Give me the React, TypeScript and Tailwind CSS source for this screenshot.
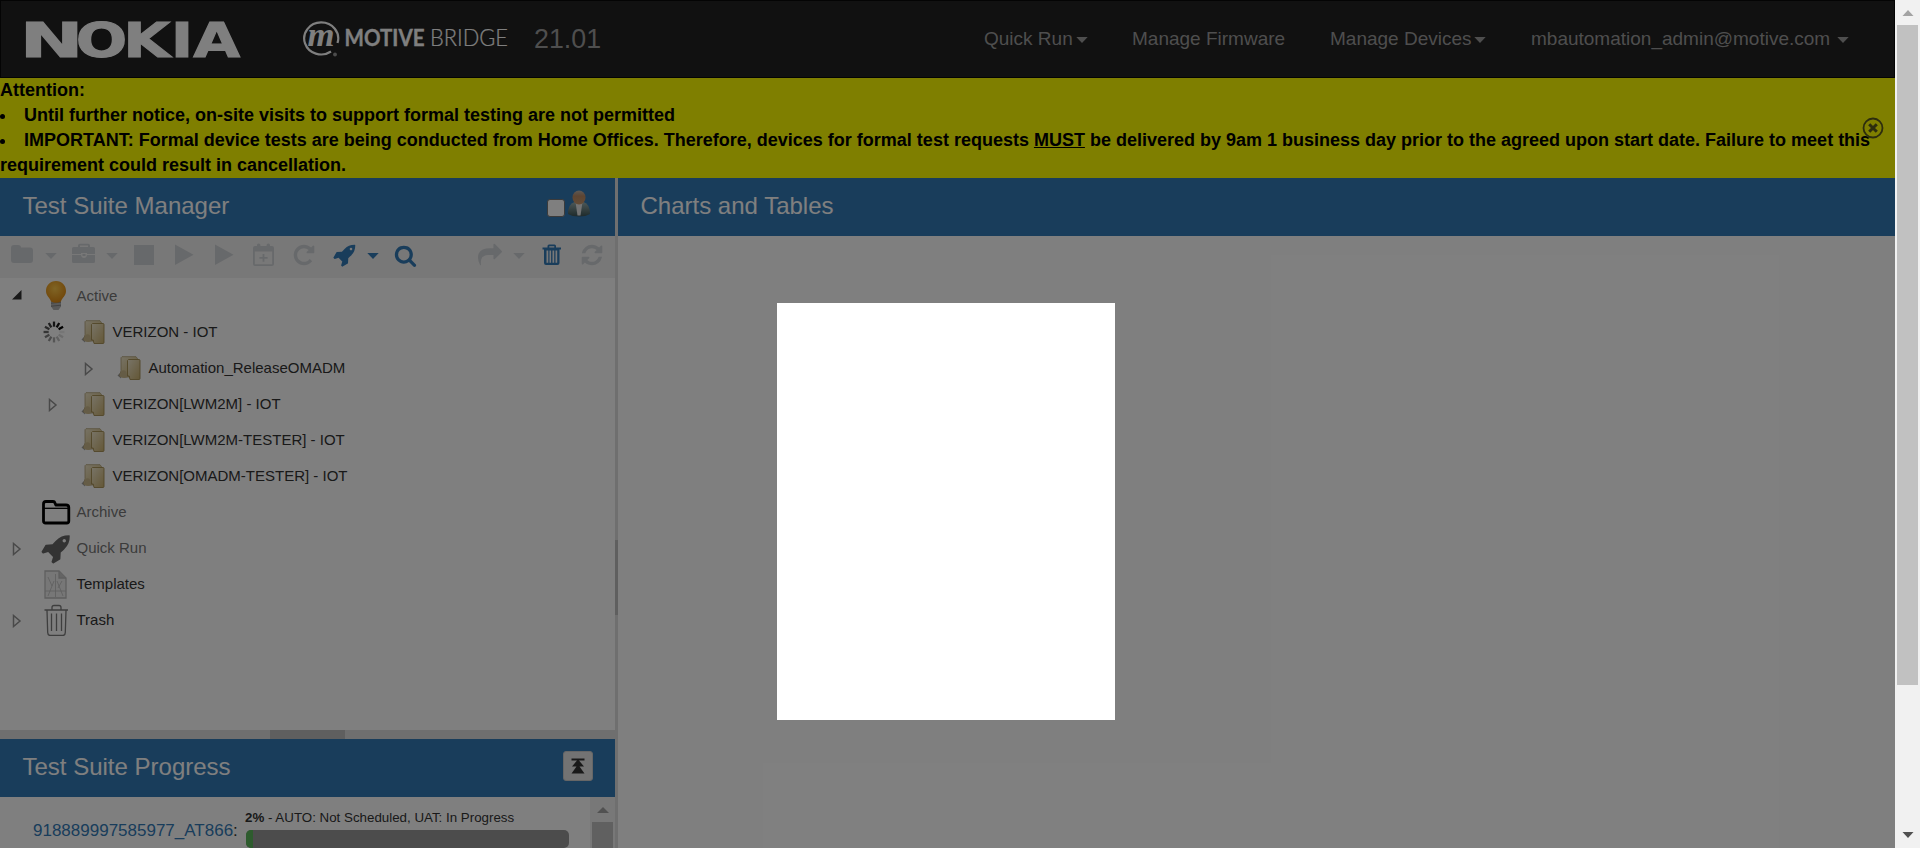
import React from "react";

const FA_ROCKET =
  "M1440 448q0-40-28-68t-68-28-68 28-28 68 28 68 68 28 68-28 28-68zm224-288q0 249-75.5 430.5T1335 955q-81 80-195 176l-20 379q-2 16-16 26l-384 224q-7 4-16 4-12 0-23-9l-64-64q-13-14-8-32l85-276-281-281-276 85q-3 1-9 1-14 0-23-9l-64-64q-17-19-5-39l224-384q10-14 26-16l379-20q96-114 176-195 188-187 358-258t431-71q14 0 24 9.5t10 22.5z";
const FA_REPEAT =
  "M1664 256v448q0 26-19 45t-45 19h-448q-42 0-59-40-17-39 14-69l138-138q-148-137-349-137-104 0-198.5 40.5t-163.5 109.5-109.5 163.5-40.5 198.5 40.5 198.5 109.5 163.5 163.5 109.5 198.5 40.5q119 0 225-52t179-147q7-10 23-12 15 0 25 9l137 138q9 8 9.5 20.5t-7.5 22.5q-109 132-264 204.5t-327 72.5q-156 0-298-61t-245-164-164-245-61-298 61-298 164-245 245-164 298-61q147 0 284.5 55.5t244.5 156.5l130-129q29-31 70-14 39 17 39 59z";
const FA_REFRESH =
  "M1639 1056q0 5-1 7-64 268-268 434.5t-478 166.5q-146 0-282.5-55t-243.5-157l-129 129q-19 19-45 19t-45-19-19-45v-448q0-26 19-45t45-19h448q26 0 45 19t19 45-19 45l-137 137q71 66 161 102t187 36q134 0 250-65t186-179q11-17 53-117 8-23 30-23h192q13 0 22.5 9.5t9.5 22.5zm25-800v448q0 26-19 45t-45 19h-448q-26 0-45-19t-19-45 19-45l138-138q-148-137-349-137-134 0-250 65t-186 179q-11 17-53 117-8 23-30 23h-199q-13 0-22.5-9.5t-9.5-22.5v-7q65-268 270-434.5t480-166.5q146 0 284 55.5t245 156.5l130-129q19-19 45-19t45 19 19 45z";
const FA_SHARE =
  "M1792 640q0 26-19 45l-512 512q-19 19-45 19t-45-19-19-45v-256h-224q-98 0-175.5 6t-154 21.5-133 42.5-105.5 69.5-80 101-48.5 138.5-17.5 181q0 55 5 123 0 6 2.5 23.5t2.5 26.5q0 15-8.5 25t-23.5 10q-16 0-28-17-7-9-13-22t-13.5-30-10.5-24q-127-285-127-451 0-199 53-333 162-403 875-403h224v-256q0-26 19-45t45-19 45 19l512 512q19 19 19 45z";
const FA_SEARCH =
  "M1216 832q0-185-131.5-316.5t-316.5-131.5-316.5 131.5-131.5 316.5 131.5 316.5 316.5 131.5 316.5-131.5 131.5-316.5zm512 832q0 52-38 90t-90 38q-54 0-90-38l-343-342q-179 124-399 124-143 0-273.5-55.5t-225-150-150-225-55.5-273.5 55.5-273.5 150-225 225-150 273.5-55.5 273.5 55.5 225 150 150 225 55.5 273.5q0 220-124 399l343 343q37 37 37 90z";

function Glyph({ d, className }: { d: string; className: string }) {
  return (
    <svg viewBox="0 0 1792 1792" className={className} fill="currentColor">
      <path d={d} />
    </svg>
  );
}

function Tool({ className, children }: { className: string; children: React.ReactNode }) {
  return (
    <svg viewBox="0 0 24 24" className={`size-6 shrink-0 ${className}`} fill="currentColor">
      {children}
    </svg>
  );
}

function Caret({ className = "" }: { className?: string }) {
  return (
    <svg viewBox="0 0 12 6" className={`h-1.5 w-3 shrink-0 ${className}`} fill="currentColor">
      <path d="M.3 0h11.4L6 6z" />
    </svg>
  );
}

function Header({ title, children }: { title: string; children?: React.ReactNode }) {
  return (
    <div className="flex h-[58px] shrink-0 items-center bg-[#337ab7] pr-[22px] pl-[22.5px] text-white">
      <h2 className="flex-1 pb-0.5 text-[24px] leading-none">{title}</h2>
      {children}
    </div>
  );
}

function Closed() {
  return (
    <svg viewBox="0 0 10 14" className="mt-0.5 h-3.5 w-2.5" fill="none" stroke="#929292" strokeWidth="1.5">
      <path d="M1.5 1.5v11L8 7z" />
    </svg>
  );
}

function Opened() {
  return (
    <svg viewBox="0 0 10 10" className="mb-0.5 size-2.5" fill="#333">
      <path d="M9.5 0v9.5H0z" />
    </svg>
  );
}

function Spinner() {
  return (
    <svg viewBox="0 0 24 24" className="ml-0.5 size-6" stroke="#000" strokeWidth="2.5">
      {Array.from({ length: 12 }, (_, i) => (
        <path
          key={i}
          d="M12 6.2V.6"
          transform={`rotate(${60 - i * 30} 12 12)`}
          opacity={1 - i * 0.085}
        />
      ))}
    </svg>
  );
}

function Folders() {
  return (
    <svg viewBox="0 0 24 24" className="size-6">
      <defs>
        <linearGradient id="manila" x1="0" y1="0" x2="1" y2="1">
          <stop offset="0" stopColor="#f1e9d0" />
          <stop offset="1" stopColor="#c8ae6c" />
        </linearGradient>
      </defs>
      <path d="M.5 19.500 4 16v6.500z" fill="#777" opacity=".7" />
      <path d="M5 .7h14l1.500 2V21H4.500l-2-1.200 1.500-5V1.700z" fill="url(#manila)" stroke="#b0a074" strokeWidth=".8" />
      <path d="M4 15.500q2.500-2.500 5 0l1.600 5.500q-4 2-7.800-.5z" fill="#cbb98c" />
      <path d="M11.500 3.500h10.500q1 0 1 1v18q0 1-1 1h-9l-.8-3.500h-1.700v-15.500z" fill="url(#manila)" stroke="#a38c50" strokeWidth=".9" />
    </svg>
  );
}

function Bulb() {
  return (
    <svg viewBox="0 0 32 32" className="size-8">
      <defs>
        <radialGradient id="glow" cx=".45" cy=".35" r=".65">
          <stop offset="0" stopColor="#ffc94a" />
          <stop offset="1" stopColor="#e08a12" />
        </radialGradient>
      </defs>
      <path d="M11 19h10v7.500l-2.500 3.500h-5l-2.500-3.500z" fill="#b4b4b4" />
      <path d="M11 23.200l10-1M11 26.200l10-1" stroke="#858585" strokeWidth="1" />
      <path d="M16 1C10 1 6 5.500 6 11c0 5 4 6.500 5 10.500q5 2.500 10 0c1-4 5-5.500 5-10.500C26 5.500 22 1 16 1z" fill="url(#glow)" />
    </svg>
  );
}

function Archive() {
  return (
    <svg viewBox="0 0 32 32" className="size-8" fill="none" stroke="#000" strokeWidth="2.800" strokeLinejoin="round">
      <path d="M3.500 8q0-2.500 2.500-2.500h7q1.500 0 2 1.500l.8 2H26q2.800 0 2.800 2.500v13.500q0 2-2 2H5.500q-2 0-2-2z" />
      <path d="M4 12.300h24.500" strokeWidth="1.300" />
    </svg>
  );
}

function Template() {
  return (
    <svg viewBox="0 0 32 32" className="size-8" fill="#efefef" stroke="#bdbdbd" strokeWidth="1.300">
      <path d="M5 3h14l7 7v20H5z" />
      <path d="M19 3v7h7" fill="#c8c8c8" />
      <path d="M5 23h21M15.500 6v23M14 13 8 28M17 13l6 15M8 9l4 9M22 13l-4 7" fill="none" strokeWidth=".8" />
    </svg>
  );
}

function Bin() {
  return (
    <svg viewBox="0 0 32 32" className="size-8" fill="none" stroke="#7c7c7c" strokeWidth="1.300">
      <path d="M4.500 6h23.500M12 6V3.500q0-2 2-2h5q2 0 2 2V6M7 6.500l.7 22q.1 3 2.500 3h12.600q2.400 0 2.500-3l.7-22M11.500 9.500v17.500M16.500 9.500v17.500M21.500 9.500v17.500" />
    </svg>
  );
}

type RowProps = {
  level?: 0 | 1 | 2;
  toggle?: React.ReactNode;
  icon: React.ReactNode;
  label: string;
  tone?: string;
};

const INDENT = ["pl-[5px]", "pl-[41px]", "pl-[77px]"];

function Row({ level = 0, toggle, icon, label, tone = "text-[#333]" }: RowProps) {
  return (
    <li className={`flex h-9 items-center ${INDENT[level]}`}>
      <span className="flex w-6 items-center justify-center">{toggle}</span>
      <span className={level === 0 ? "ml-[11px] w-8" : "ml-4 w-6"}>{icon}</span>
      <span className={`text-[15px] ${level === 0 ? "ml-[4.5px]" : "ml-[7.5px]"} ${tone}`}>{label}</span>
    </li>
  );
}

function Navbar() {
  return (
    <nav className="flex h-[78px] shrink-0 items-center border border-[#080808] bg-[#222] text-[19px] text-[#9d9d9d]">
      <svg viewBox="-5 -14 230 68" className="ml-[18px] h-[68px] w-[230px]" fill="#fff">
        <g
          transform="scale(1.25 1)"
          fontFamily="DejaVu Sans"
          fontWeight="700"
          fontSize="48.500"
          stroke="#fff"
          strokeWidth="1"
        >
          <text y="38">
            <tspan x="-3.500" textLength="51" lengthAdjust="spacingAndGlyphs">N</tspan>
            <tspan x="41.500 79.500 117.500 135.500">OKIA</tspan>
          </text>
        </g>
      </svg>
      <svg viewBox="0 -10 212 60" className="ml-[53px] h-[60px] w-[212px]" fill="#fff">
        <path d="M29 32.500A17 16 0 1 1 35.500 24" fill="none" stroke="#fff" strokeWidth="2.200" />
        <circle cx="33" cy="35.500" r="1.900" fill="#999" />
        <text x="5.500" y="26.500" fontFamily="Liberation Serif" fontStyle="italic" fontWeight="700" fontSize="34" textLength="27" lengthAdjust="spacingAndGlyphs">
          m
        </text>
        <text x="42.500" y="27" fontFamily="Lato" fontWeight="700" fontSize="23" textLength="80" lengthAdjust="spacingAndGlyphs" stroke="#fff" strokeWidth=".3">
          MOTIVE
        </text>
        <text x="128" y="27" fontFamily="Lato" fontWeight="300" fontSize="23" textLength="78" lengthAdjust="spacingAndGlyphs" stroke="#fff" strokeWidth=".2">
          BRIDGE
        </text>
      </svg>
      <span className="ml-5 flex-1 text-[26.8px]">21.01</span>
      <span className="flex w-[148px] items-center">
        Quick Run
        <Caret className="mt-0.5 ml-[3px]" />
      </span>
      <span className="w-[198px]">Manage Firmware</span>
      <span className="flex w-[201px] items-center">
        Manage Devices
        <Caret className="mt-0.5 ml-0.5" />
      </span>
      <span className="flex w-[363px] items-center">
        mbautomation_admin@motive.com
        <Caret className="mt-0.5 ml-[7px]" />
      </span>
    </nav>
  );
}

function Toolbar() {
  return (
    <div className="flex h-[42px] shrink-0 items-start bg-[#f0f0f0] pt-[7px] text-[#cfd2d6]">
      <Tool className="ml-2.5">
        <path d="M1 5q0-3 3-3h4q3 0 3 2.500h9q3 0 3 3V17q0 3-3 3H4q-3 0-3-3z" />
      </Tool>
      <Caret className="mt-2.5 ml-[11px]" />
      <Tool className="ml-[15px]">
        <path d="M6 4V2.500Q6 .8 8 .8h8q2 0 2 1.700V4h3.500Q23 4 23 5.500V11h-8v-1H9v1H0V5.500Q0 4 1.500 4zm2 0h8V2.600H8zM0 12h9q.5 3 3 3t3-3h8v6.500q0 1.500-1.500 1.500h-20Q0 20 0 18.500zM10.500 11h3v2h-3z" />
      </Tool>
      <Caret className="mt-2.5 ml-2.5" />
      <Tool className="ml-3.5">
        <path d="M2 2h20v20H2z" />
      </Tool>
      <Tool className="ml-[17px]">
        <path d="M2 1.500v20.500l18.500-10.200z" />
      </Tool>
      <Tool className="ml-4">
        <path d="M2 1.500v20.500l18.500-10.200z" />
      </Tool>
      <Tool className="ml-[15px]">
        <path fillRule="evenodd" d="M1 5q0-2 2-2h2V2q0-1.500 1.700-1.500T8.400 2v1h6.200V2q0-1.500 1.700-1.500T18 2v1h2q2 0 2 2v16q0 2-2 2H3q-2 0-2-2zm1.800 3.500v12.800h17.400V8.500zM10.600 11h1.800v3h3.200v1.800h-3.200v3h-1.800v-3H7.400V14h3.200z" />
      </Tool>
      <Glyph d={FA_REPEAT} className="ml-4 size-6" />
      <Glyph d={FA_ROCKET} className="ml-[17px] size-6 text-[#337ab7]" />
      <Caret className="mt-2.5 ml-2.5 text-[#337ab7]" />
      <Glyph d={FA_SEARCH} className="mt-px ml-[15px] size-[23px] text-[#337ab7]" />
      <Glyph d={FA_SHARE} className="ml-[61px] size-6" />
      <Caret className="mt-2.5 ml-[11px]" />
      <Tool className="ml-[15px] text-[#337ab7]">
        <path fillRule="evenodd" d="M7.500 4.500V3q0-1.500 1.500-1.500h5.500Q16 1.500 16 3v1.500h5v2h-1.500V20q0 2-2 2H6q-2 0-2-2V6.500H2.500v-2zm1.800 0h5V3.200h-5zM6.500 7.500v12.300h1.800V7.500zm3 0v12.300h1.600V7.500zm3 0v12.300h1.700V7.500zm3 0v12.300h1.700V7.500z" />
      </Tool>
      <Glyph d={FA_REFRESH} className="ml-[15.5px] size-6" />
    </div>
  );
}

function SuiteTree() {
  return (
    <ul className="h-[452px] shrink-0 bg-white">
      <Row toggle={<Opened />} icon={<Bulb />} label="Active" tone="text-[#777]" />
      <Row level={1} toggle={<Spinner />} icon={<Folders />} label="VERIZON - IOT" />
      <Row level={2} toggle={<Closed />} icon={<Folders />} label="Automation_ReleaseOMADM" />
      <Row level={1} toggle={<Closed />} icon={<Folders />} label="VERIZON[LWM2M] - IOT" />
      <Row level={1} icon={<Folders />} label="VERIZON[LWM2M-TESTER] - IOT" />
      <Row level={1} icon={<Folders />} label="VERIZON[OMADM-TESTER] - IOT" />
      <Row icon={<Archive />} label="Archive" tone="text-[#777]" />
      <Row
        toggle={<Closed />}
        icon={<Glyph d={FA_ROCKET} className="ml-px size-[31px] text-[#666]" />}
        label="Quick Run"
        tone="text-[#777]"
      />
      <Row icon={<Template />} label="Templates" />
      <Row toggle={<Closed />} icon={<Bin />} label="Trash" />
    </ul>
  );
}

function UserIcon() {
  return (
    <svg viewBox="0 0 24 27" className="ml-0.5 h-[27px] w-6">
      <defs>
        <linearGradient id="suit" x1="0" y1="0" x2="0" y2="1">
          <stop offset="0" stopColor="#9ab0b0" />
          <stop offset="1" stopColor="#3c5556" />
        </linearGradient>
        <linearGradient id="face" x1="0" y1="0" x2="0" y2="1">
          <stop offset="0" stopColor="#b9b3ac" />
          <stop offset=".4" stopColor="#b98a66" />
          <stop offset="1" stopColor="#c9986c" />
        </linearGradient>
      </defs>
      <path d="M1 24q0-10 6.500-12h9Q23 14 23 24q-4 2.500-11 2.500T1 24z" fill="url(#suit)" />
      <path d="M8.500 12h7l-2 13.500h-3z" fill="#e6e6e6" />
      <ellipse cx="12" cy="7.500" rx="6.500" ry="7" fill="url(#face)" />
    </svg>
  );
}

function Progress() {
  return (
    <div className="flex h-[51px] bg-white text-[#333]">
      <div className="w-[245px] pt-[22px] pl-[33px] text-[17px] leading-6">
        <span className="text-[#337ab7]">918889997585977_AT866</span>:
      </div>
      <div className="w-[345px] pt-[11px]">
        <p className="h-[22px] text-[13.33px] leading-5">
          <b>2%</b> - AUTO: Not Scheduled, UAT: In Progress
        </p>
        <div className="ml-px h-[18px] w-[323px] overflow-hidden rounded-[5px] bg-[#999]">
          <div className="h-full w-[7px] bg-[#5cb85c]" />
        </div>
      </div>
      <div className="flex w-[25px] flex-col items-center bg-[#f1f1f1]">
        <svg viewBox="0 0 12 6" className="mt-2.5 h-1.5 w-3" fill="#a3a3a3">
          <path d="M0 6h12L6 0z" />
        </svg>
        <div className="mt-[9px] w-[21px] flex-1 bg-[#c1c1c1]" />
      </div>
    </div>
  );
}

function Notice() {
  return (
    <div className="relative h-[100px] shrink-0 bg-[#ff0] text-[18px] leading-[25px] font-bold text-black">
      Attention:
      <ul className="list-inside list-disc">
        <li>Until further notice, on-site visits to support formal testing are not permitted</li>
        <li>
          IMPORTANT: Formal device tests are being conducted from Home Offices. Therefore, devices for formal test
          requests <u>MUST</u> be delivered by 9am 1 business day prior to the agreed upon start date. Failure to meet
          this requirement could result in cancellation.
        </li>
      </ul>
      <svg viewBox="0 0 22 22" className="absolute top-[39px] right-[11px] size-[22px]" fill="none" stroke="#5a5a1c">
        <circle cx="11" cy="11" r="9.500" strokeWidth="1.800" />
        <path d="M7.200 7.200l7.600 7.600M14.800 7.200l-7.600 7.600" strokeWidth="3" />
      </svg>
    </div>
  );
}

export default function App() {
  return (
    <div className="flex h-[848px] w-[1920px] overflow-hidden bg-white font-['Liberation_Sans',Arial,sans-serif]">
      <div className="relative flex w-[1895px] flex-col">
        <Navbar />
        <Notice />
        <main className="flex flex-1">
          <section className="flex w-[615px] flex-col">
            <Header title="Test Suite Manager">
              <span className="mt-px size-[18px] rounded-[3px] border-[1.500px] border-[#767676] bg-white" />
              <span className="mr-0.5 -mt-2">
                <UserIcon />
              </span>
            </Header>
            <Toolbar />
            <SuiteTree />
            <div className="flex h-[9px] shrink-0 justify-center bg-[#dedede]">
              <div className="w-[75px] bg-[#bebebe]" />
            </div>
            <Header title="Test Suite Progress">
              <span className="mb-1 flex size-[30px] items-center justify-center rounded-[3px] border border-[#ccc] bg-[#e6e6e6]">
                <svg viewBox="0 0 14 16" className="h-4 w-3.5" fill="#333">
                  <path d="M.5.500h13v2H8L13 8.500H8.500L13.500 15.500H.5L5.500 8.500H1L6 2.500H.5z" />
                </svg>
              </span>
            </Header>
            <Progress />
          </section>
          <div className="flex w-[3px] flex-col bg-[#dedede] pt-[362px]">
            <div className="h-[75px] bg-[#bebebe]" />
          </div>
          <section className="flex-1">
            <Header title="Charts and Tables" />
          </section>
        </main>
        <div className="absolute inset-0 bg-black/50" />
        <div className="absolute top-[303px] left-[777px] h-[417px] w-[338px] bg-white" />
      </div>
      <div className="flex w-[25px] flex-col items-center bg-[#f1f1f1]">
        <svg viewBox="0 0 12 6" className="mt-2.5 h-1.5 w-3" fill="#a3a3a3">
          <path d="M.5 6h11L6 0z" />
        </svg>
        <div className="mt-[9px] h-[660px] w-[21px] bg-[#c1c1c1]" />
        <svg viewBox="0 0 12 6" className="mt-[147px] h-1.5 w-3" fill="#505050">
          <path d="M.5 0h11L6 6z" />
        </svg>
      </div>
    </div>
  );
}
